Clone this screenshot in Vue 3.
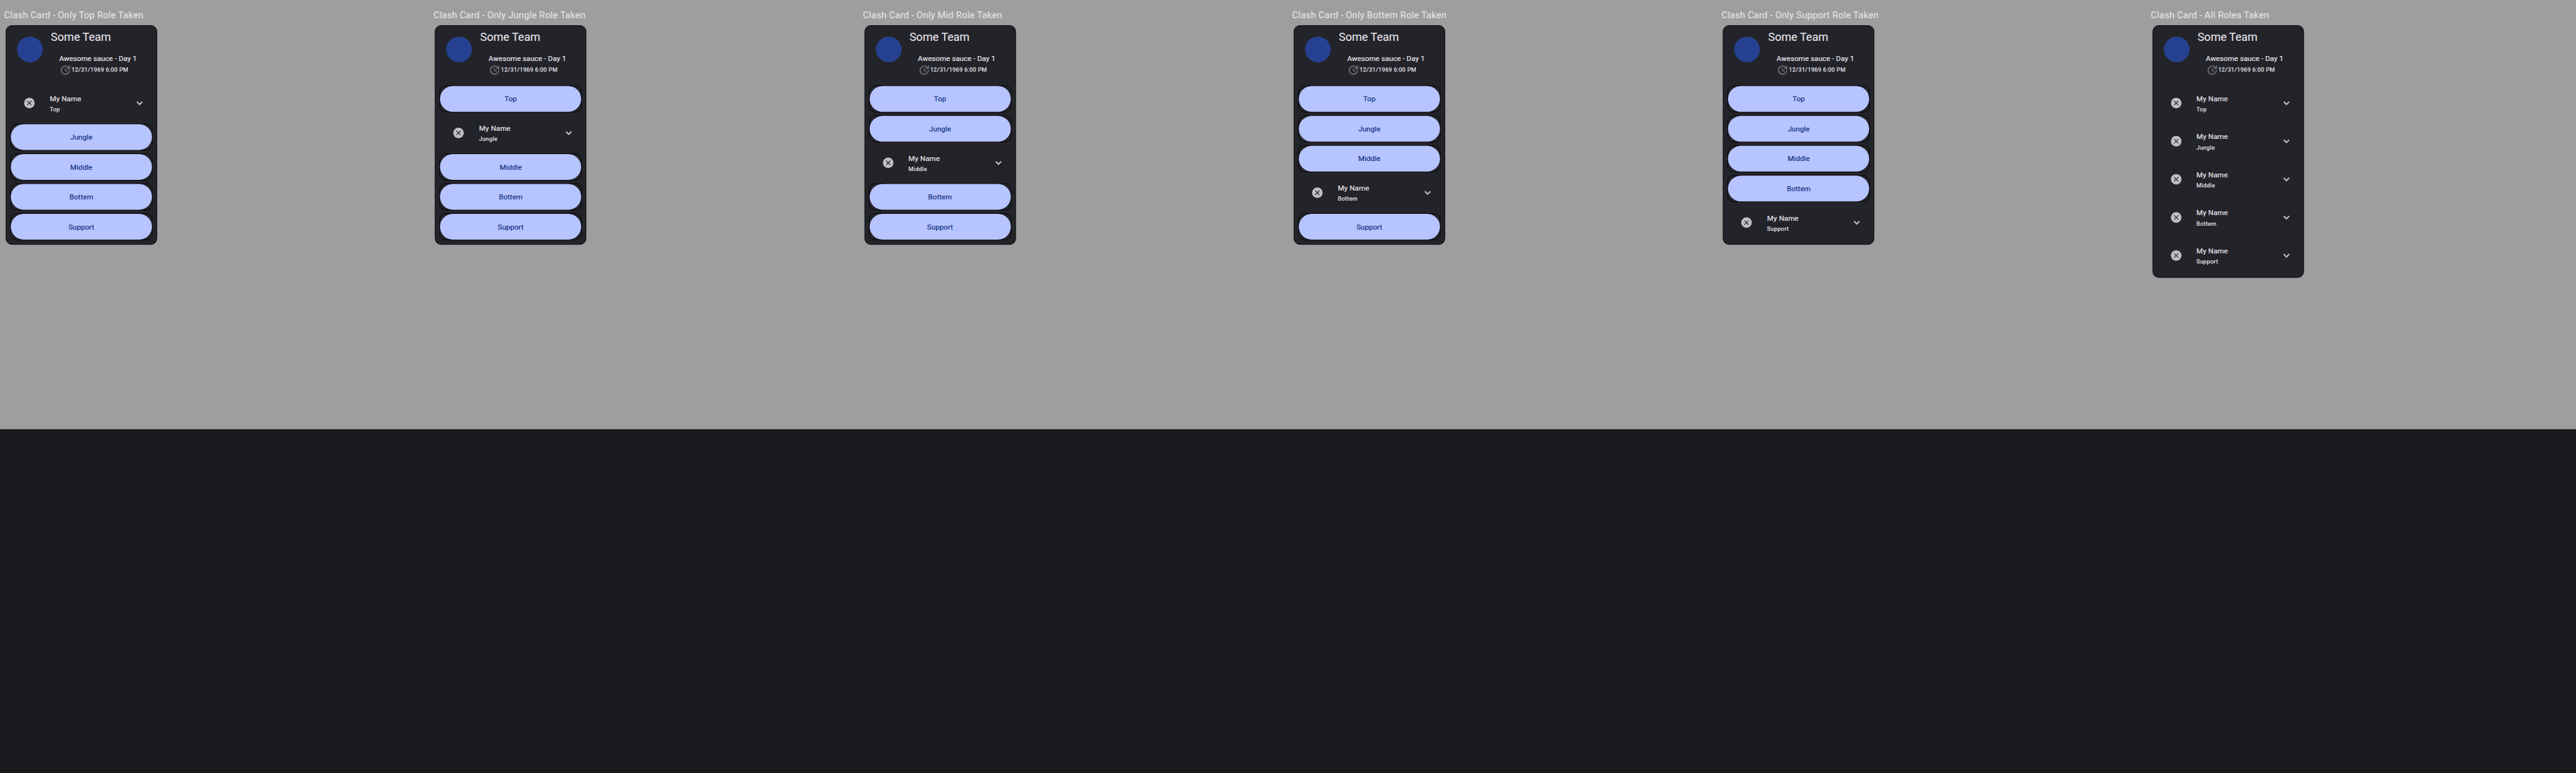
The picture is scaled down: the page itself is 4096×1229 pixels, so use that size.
<script setup>
const roles = ['Top', 'Jungle', 'Middle', 'Bottem', 'Support']
const stories = [
  { title: 'Clash Card - Only Top Role Taken', taken: ['Top'] },
  { title: 'Clash Card - Only Jungle Role Taken', taken: ['Jungle'] },
  { title: 'Clash Card - Only Mid Role Taken', taken: ['Middle'] },
  { title: 'Clash Card - Only Bottem Role Taken', taken: ['Bottem'] },
  { title: 'Clash Card - Only Support Role Taken', taken: ['Support'] },
  { title: 'Clash Card - All Roles Taken', taken: roles }
]
</script>

<template>
  <div class="viewport">
    <main class="stage">
      <section v-for="story in stories" :key="story.title" class="story">
        <h2 class="story-title">{{ story.title }}</h2>
        <article class="card">
          <header class="card-header">
            <div class="avatar"></div>
            <div class="team">
              <h3 class="team-name">Some Team</h3>
              <div class="event">
                <p class="event-name">Awesome sauce - Day 1</p>
                <div class="event-time">
                  <svg class="update-icon" viewBox="0 0 24 24" width="24" height="24">
                    <path d="M21 10.12h-6.78l2.74-2.82c-2.73-2.7-7.15-2.8-9.88-.1-2.73 2.71-2.73 7.08 0 9.79s7.15 2.71 9.88 0C18.32 15.65 19 14.08 19 12.1h2c0 1.98-.88 4.55-2.64 6.29-3.51 3.48-9.21 3.48-12.72 0-3.5-3.47-3.53-9.11-.02-12.58s9.14-3.47 12.65 0L21 3v7.12zM12.5 8v4.25l3.5 2.08-.72 1.21L11 13V8h1.5z" />
                  </svg>
                  <span>12/31/1969 6:00 PM</span>
                </div>
              </div>
            </div>
          </header>
          <div class="roles">
            <template v-for="role in roles" :key="role">
              <div v-if="story.taken.includes(role)" class="member">
                <svg class="remove-icon" viewBox="0 0 22 22" width="22" height="22">
                  <circle cx="11" cy="11" r="10.3" />
                  <path d="M6.9 6.9l8.2 8.2M15.1 6.9l-8.2 8.2" />
                </svg>
                <div class="member-text">
                  <p class="member-name">My Name</p>
                  <p class="member-role">{{ role }}</p>
                </div>
                <svg class="chevron" viewBox="0 0 24 24" width="24" height="24">
                  <path d="M6.7 9.3l5.3 5.3 5.3-5.3" />
                </svg>
              </div>
              <div v-else class="slot">
                <button class="slot-button" type="button">{{ role }}</button>
              </div>
            </template>
          </div>
        </article>
      </section>
    </main>
  </div>
</template>

<style>
body {
  margin: 0;
  background: #1b1b1f;
}
</style>

<style scoped>
.viewport {
  width: 4096px;
  height: 1229px;
  overflow: hidden;
  background: #1b1b1f;
}
.stage {
  display: flex;
  width: 5000px;
  height: 833.33px;
  background: #9e9e9e;
  transform: scale(0.8192);
  transform-origin: 0 0;
  font-family: Roboto, "Noto Sans", sans-serif;
  color: #e4e1e6;
  -webkit-text-stroke-width: 0.2px;
}
.story {
  flex: 1 1 0;
  min-width: 0;
}
h2, h3, p {
  margin: 0;
}
.story-title {
  padding: 17px 0 8px 8px;
  font-size: 18px;
  font-weight: 400;
  line-height: 24px;
  letter-spacing: 0.25px;
  white-space: nowrap;
}
.card {
  box-sizing: border-box;
  width: 294px;
  margin-left: 11px;
  padding-bottom: 5px;
  border: 1px solid #000;
  border-radius: 12px;
  background: #23232a;
}
.card-header {
  display: flex;
  box-sizing: border-box;
  height: 113px;
  padding: 8px 0 0 21px;
}
.avatar {
  flex: none;
  width: 50px;
  height: 50px;
  margin-top: 13px;
  border-radius: 50%;
  background: #264191;
}
.team {
  margin-left: 15.7px;
  white-space: nowrap;
}
.team-name {
  font-size: 22px;
  font-weight: 400;
  line-height: 28px;
}
.event {
  margin: 18px 0 0 16.3px;
}
.event-name {
  font-size: 14px;
  font-weight: 400;
  line-height: 20px;
  letter-spacing: 0.12px;
}
.event-time {
  display: flex;
  align-items: center;
  height: 24px;
  font-size: 11px;
  font-weight: 400;
  line-height: 16px;
  letter-spacing: 0.46px;
}
.update-icon {
  fill: #6b6b70;
  stroke: #6b6b70;
  stroke-width: 0.5;
}
.roles {
  display: flex;
  flex-direction: column;
}
.member {
  display: flex;
  align-items: center;
  height: 74px;
  padding: 0 21px 0 34px;
}
.remove-icon circle {
  fill: #c0c0c2;
}
.remove-icon path {
  fill: none;
  stroke: #23232a;
  stroke-width: 1.4;
}
.member-text {
  flex: 1;
  margin: 2px 0 0 28.7px;
}
.member-name {
  font-size: 14px;
  font-weight: 400;
  line-height: 20px;
  letter-spacing: 0.2px;
}
.member-role {
  margin-top: 4px;
  font-size: 11px;
  font-weight: 400;
  line-height: 16px;
  letter-spacing: 0.48px;
}
.event-name,
.event-time,
.member-name,
.member-role {
  -webkit-text-stroke-width: 0.3px;
}
.chevron path {
  fill: none;
  stroke: #c0c0c2;
  stroke-width: 2.6;
}
.slot {
  box-sizing: border-box;
  height: 52px;
  margin: 3px 8px;
  border: 1px solid #000;
  border-radius: 12px;
}
.slot-button {
  display: block;
  width: 100%;
  height: 50px;
  padding: 0;
  border: 0;
  border-radius: 25px;
  background: #b6c4ff;
  color: #08297a;
  font: 400 14px/20px Roboto, "Noto Sans", sans-serif;
  letter-spacing: 0.1px;
}
</style>
